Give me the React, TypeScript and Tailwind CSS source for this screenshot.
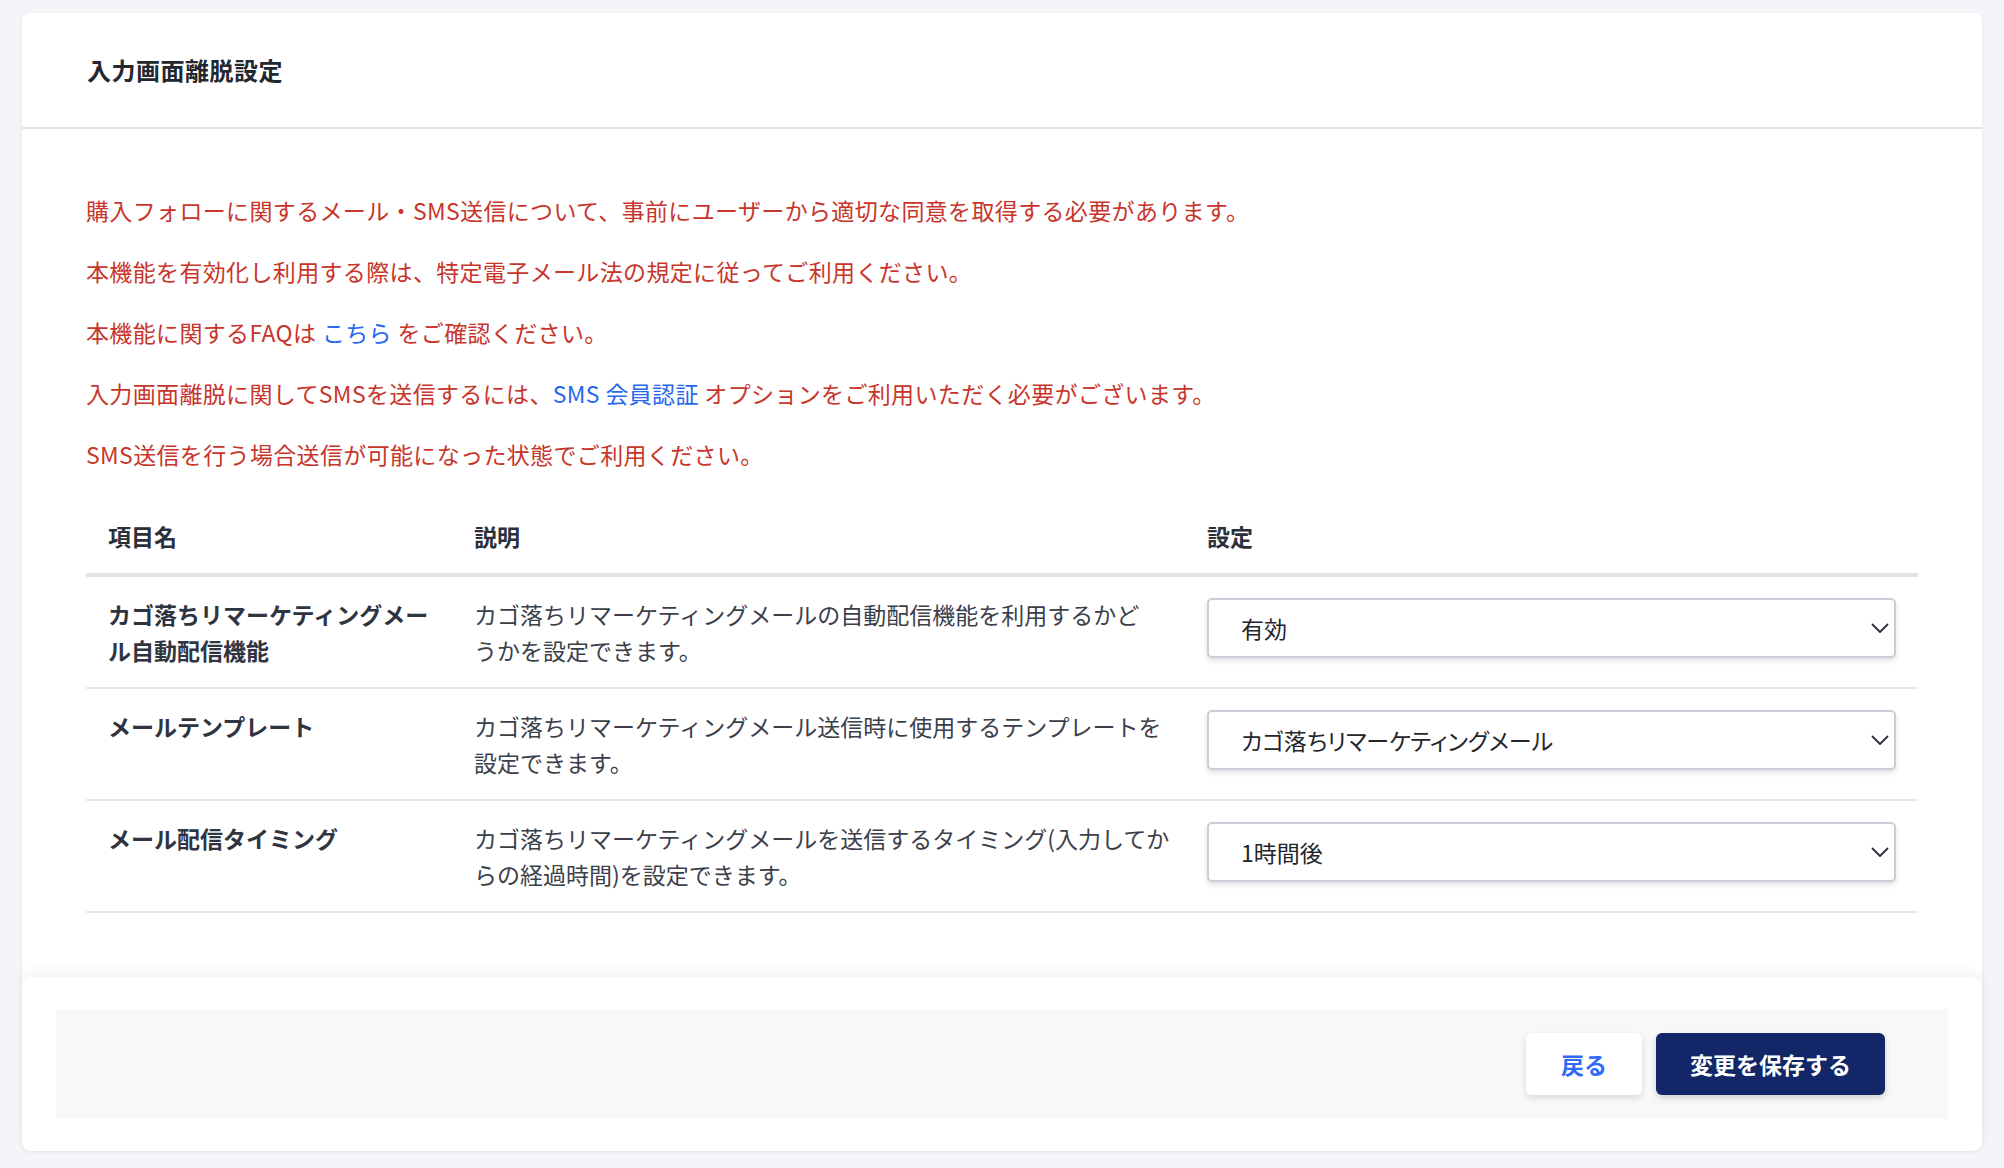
import { useState } from "react";

type Row = {
  label: string;
  desc: string;
  name: string;
  options: string[];
};

const rows: Row[] = [
  {
    label: "カゴ落ちリマーケティングメール自動配信機能",
    desc: "カゴ落ちリマーケティングメールの自動配信機能を利用するかど\nうかを設定できます。",
    name: "enabled",
    options: ["有効", "無効"],
  },
  {
    label: "メールテンプレート",
    desc: "カゴ落ちリマーケティングメール送信時に使用するテンプレートを\n設定できます。",
    name: "template",
    options: ["カゴ落ちリマーケティングメール"],
  },
  {
    label: "メール配信タイミング",
    desc: "カゴ落ちリマーケティングメールを送信するタイミング(入力してか\nらの経過時間)を設定できます。",
    name: "timing",
    options: ["1時間後", "3時間後", "6時間後", "12時間後", "24時間後"],
  },
];

function Chevron() {
  return (
    <svg
      width="18"
      height="10"
      viewBox="0 0 18 10"
      fill="none"
      stroke="#2d3038"
      strokeWidth="1.8"
      strokeLinecap="round"
      strokeLinejoin="round"
      className="pointer-events-none absolute right-[7px] top-1/2 -translate-y-1/2"
    >
      <path d="M1.5 1.5l7.5 7.5 7.5-7.5" />
    </svg>
  );
}

export default function App() {
  const [form, setForm] = useState<Record<string, string>>({
    enabled: "有効",
    template: "カゴ落ちリマーケティングメール",
    timing: "1時間後",
  });

  const handleChange = (e: React.ChangeEvent<HTMLSelectElement>) => {
    setForm({ ...form, [e.target.name]: e.target.value });
  };

  return (
    <div className="min-h-screen bg-[#f3f5f8] pt-[13px] pb-[16px] px-[22px] font-['Noto_Sans_CJK_JP','Noto_Sans',sans-serif]">
      <div className="bg-white rounded-lg shadow-[0_1px_4px_rgba(30,40,60,0.07)]">
        {/* header */}
        <div className="px-[65px] py-[39px] border-b-2 border-[#e3e4e8]">
          <h1 className="text-[24px] leading-[36px] font-bold text-[#23272f] tracking-[0.5px]">
            入力画面離脱設定
          </h1>
        </div>

        {/* body */}
        <div className="px-16 pt-[63px] pb-16">
          <div className="text-[23px] leading-[37px] text-[#c8352b] tracking-[0.35px] space-y-[24px]">
            <p>購入フォローに関するメール・SMS送信について、事前にユーザーから適切な同意を取得する必要があります。</p>
            <p>本機能を有効化し利用する際は、特定電子メール法の規定に従ってご利用ください。</p>
            <p>
              本機能に関するFAQは <a href="#" className="text-[#2667ee]">こちら</a> をご確認ください。
            </p>
            <p>
              入力画面離脱に関してSMSを送信するには、<a href="#" className="text-[#2667ee]">SMS 会員認証</a> オプションをご利用いただく必要がございます。
            </p>
            <p>SMS送信を行う場合送信が可能になった状態でご利用ください。</p>
          </div>

          <table className="mt-[25px] w-full table-fixed border-collapse">
            <colgroup>
              <col className="w-[366px]" />
              <col className="w-[733px]" />
              <col className="w-[733px]" />
            </colgroup>
            <thead>
              <tr className="border-b-4 border-[#e3e4e9]">
                <th className="pl-[22px] pr-[19px] pt-5 pb-[18px] text-left text-[23px] leading-[37px] font-bold text-[#2b303b]">
                  項目名
                </th>
                <th className="px-[22px] pt-5 pb-[18px] text-left text-[23px] leading-[37px] font-bold text-[#2b303b]">
                  説明
                </th>
                <th className="px-[22px] pt-5 pb-[18px] text-left text-[23px] leading-[37px] font-bold text-[#2b303b]">
                  設定
                </th>
              </tr>
            </thead>
            <tbody>
              {rows.map((row) => (
                <tr key={row.name} className="border-b-2 border-[#e6e7eb]">
                  <td className="align-top pl-[22px] pr-[19px] pt-[19px] pb-2 text-[23px] leading-[36px] font-bold text-[#2f3441]">
                    {row.label}
                  </td>
                  <td className="align-top pl-[22px] pr-[4px] pt-[19px] pb-2 text-[23px] leading-[36px] text-[#3b404b] whitespace-pre-line">
                    {row.desc}
                  </td>
                  <td className="align-top px-[22px] pt-[21px] pb-[29px]">
                    <div className="relative">
                      <select
                        name={row.name}
                        value={form[row.name]}
                        onChange={handleChange}
                        className="block w-full h-[60px] appearance-none rounded-[5px] border-2 border-[#c9ccd9] bg-white pl-[32px] pr-12 text-[23px] text-[#23252b] [font-feature-settings:'palt'] shadow-[0_3px_5px_rgba(40,50,80,0.14)] focus:outline-none"
                      >
                        {row.options.map((o) => (
                          <option key={o} value={o}>
                            {o}
                          </option>
                        ))}
                      </select>
                      <Chevron />
                    </div>
                  </td>
                </tr>
              ))}
            </tbody>
          </table>
        </div>

        {/* footer */}
        <div className="rounded-xl bg-white px-[34px] py-8 shadow-[0_-6px_14px_rgba(30,40,60,0.05)]">
          <div className="flex h-[110px] items-center justify-end gap-[14px] bg-[#f7f8fa] pr-[63px]">
            <button className="h-[62px] rounded-[6px] bg-white px-[35px] text-[23px] font-bold text-[#2f6cf5] shadow-[0_3px_6px_rgba(0,0,0,0.13)]">
              戻る
            </button>
            <button className="h-[62px] rounded-[6px] bg-[#122668] px-[34px] text-[23px] font-bold text-white shadow-[0_3px_6px_rgba(0,0,0,0.16)]">
              変更を保存する
            </button>
          </div>
        </div>
      </div>
    </div>
  );
}
